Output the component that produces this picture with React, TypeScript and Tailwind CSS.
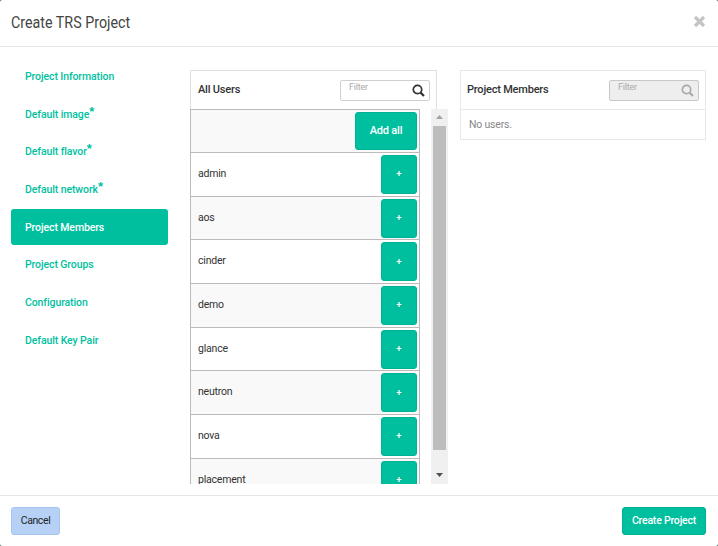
import React from "react";

const steps: [string, boolean][] = [
  ["Project Information", false],
  ["Default image", true],
  ["Default flavor", true],
  ["Default network", true],
  ["Project Members", false],
  ["Project Groups", false],
  ["Configuration", false],
  ["Default Key Pair", false],
];
const users = ["admin", "aos", "cinder", "demo", "glance", "neutron", "nova", "placement"];

function Search({ color }: { color: string }) {
  return (
    <svg width="13" height="13" viewBox="0 0 13 13" fill="none" stroke={color} strokeWidth="1.7">
      <circle cx="5.5" cy="5.5" r="4.2" />
      <path d="M8.6 8.6 L12 12" strokeWidth="2.2" />
    </svg>
  );
}

export default function App() {
  return (
    <div className="w-[718px] h-[546px] bg-[#2a5a52]">
      <div className="w-full h-full bg-white rounded-[2px] flex flex-col overflow-hidden font-['Roboto',sans-serif] text-[#333]">
        <header className="h-[47px] shrink-0 border-b border-[#e5e5e5] flex items-center justify-between pl-[11px] pr-[12px]">
          <h1 className="text-[17px] text-[#444] origin-left scale-x-[0.84] whitespace-nowrap">Create TRS Project</h1>
          <svg width="13" height="13" viewBox="0 0 13 13" className="mb-[4px]">
            <path d="M2 2 L11 11 M11 2 L2 11" stroke="#c4c4c4" strokeWidth="3.2" />
          </svg>
        </header>

        <main className="h-[448px] shrink-0 flex pl-[11px]">
          <nav className="w-[157px] shrink-0 pt-[11px] flex flex-col">
            {steps.map(([s, star]) => {
              const active = s === "Project Members";
              return (
                <div
                  key={s}
                  className={`h-[36px] mb-[1.65px] rounded-[3px] pl-[14px] pt-[2px] flex items-center text-[10.5px] tracking-[-0.1px] font-medium ${
                    active ? "bg-[#00bf9f] text-white" : "text-[#00bf9f]"
                  }`}
                >
                  <span className="relative">
                    {s}
                    {star && <span className="absolute left-full -top-[5px] text-[13px] font-bold font-['Liberation_Sans',sans-serif]">*</span>}
                  </span>
                </div>
              );
            })}
          </nav>

          <section className="w-[258px] ml-[22px] pt-[23px] flex flex-col">
            <div className="w-[247px] h-[39px] shrink-0 border border-b-0 border-[#e0e0e0] flex items-center justify-between pl-[7px] pr-[6px]">
              <span className="text-[11px] tracking-[-0.2px] font-medium">All Users</span>
              <div className="w-[90px] h-[21px] border border-[#d0d0d0] rounded-[2px] flex items-center justify-between pl-[8px] pr-[4px]">
                <span className="text-[9px] tracking-[-0.2px] text-[#aaa] -mt-[4px]">Filter</span>
                <Search color="#333" />
              </div>
            </div>
            <div className="flex h-[375px] shrink-0">
              <div className="w-[230px] overflow-hidden border-l border-r border-t border-[#bbb]">
                <div className="h-[43px] bg-[#f9f9f9] border-b border-[#bbb] flex justify-end items-center pr-[2px]">
                  <button className="w-[62px] h-[38px] bg-[#00bf9f] border border-[#00b294] rounded-[3px] text-white text-[11px] tracking-[-0.2px] font-medium">Add all</button>
                </div>
                {users.map((u, i) => (
                  <div
                    key={u}
                    className={`h-[43.7px] border-b border-[#bbb] flex justify-between items-center pl-[7px] pr-[2px] ${
                      i % 2 === 1 ? "bg-[#f9f9f9]" : "bg-white"
                    }`}
                  >
                    <span className="text-[10.5px] tracking-[-0.2px] -mt-[1px]">{u}</span>
                    <button className="w-[36px] h-[39px] bg-[#00bf9f] border border-[#00b294] rounded-[3px] text-white text-[9.5px] font-medium">+</button>
                  </div>
                ))}
              </div>
              <div className="ml-[11px] w-[17px] bg-[#f0f0f0] flex flex-col items-center">
                <svg width="9" height="17" viewBox="0 0 9 17"><path d="M1 10 L4.5 6 L8 10 Z" fill="#a3a3a3" /></svg>
                <div className="w-[13px] h-[324px] bg-[#bdbdbd]" />
                <svg width="9" height="17" viewBox="0 0 9 17" className="mt-auto"><path d="M1 6 L8 6 L4.5 10 Z" fill="#505050" /></svg>
              </div>
            </div>
          </section>

          <section className="w-[246px] ml-[12px] mt-[23px] h-[70px] border border-[#e8e8e8] flex flex-col">
            <div className="h-[39px] border-b border-[#e8e8e8] flex items-center justify-between pl-[6px] pr-[6px]">
              <span className="text-[11px] tracking-[-0.2px] font-medium">Project Members</span>
              <div className="w-[90px] h-[21px] bg-[#eeeeee] border border-[#c8c8c8] rounded-[2px] flex items-center justify-between pl-[8px] pr-[4px]">
                <span className="text-[9px] tracking-[-0.2px] text-[#aaa] -mt-[4px]">Filter</span>
                <Search color="#aaa" />
              </div>
            </div>
            <div className="flex-1 flex items-center pl-[8px] text-[10.5px] tracking-[-0.2px] text-[#888]">No users.</div>
          </section>
        </main>

        <footer className="flex-1 border-t border-[#e5e5e5] flex items-center justify-between pl-[11px] pr-[12px]">
          <button className="w-[49px] h-[28px] bg-[#b6d1f5] border border-[#a5c4ee] rounded-[3px] text-[10.5px] tracking-[-0.4px] text-[#222]">Cancel</button>
          <button className="w-[84px] h-[28px] bg-[#00bf9f] border border-[#00b294] rounded-[3px] text-[10.5px] tracking-[-0.2px] text-white font-medium">Create Project</button>
        </footer>
      </div>
    </div>
  );
}
